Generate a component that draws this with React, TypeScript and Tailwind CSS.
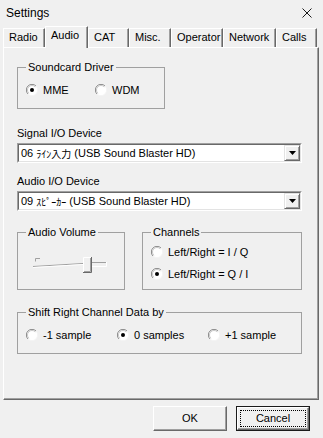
import React from "react";

function Radio({ checked }: { checked?: boolean }) {
  return (
    <svg width="12" height="12" viewBox="0 0 12 12" className="shrink-0">
      <circle cx="6" cy="6" r="5.5" fill="#ffffff" />
      <path d="M10 2 A5.5 5.5 0 0 0 2 10" fill="none" stroke="#8a8a8a" strokeWidth="1" />
      <path d="M9.2 2.8 A4.5 4.5 0 0 0 2.8 9.2" fill="none" stroke="#c8c8c8" strokeWidth="1" />
      <path d="M2 10 A5.5 5.5 0 0 0 10 2" fill="none" stroke="#f4f4f4" strokeWidth="1" />
      {checked && <circle cx="6" cy="6" r="2" fill="#000000" />}
    </svg>
  );
}

function RadioItem({ label, checked, w }: { label: string; checked?: boolean; w: string }) {
  return (
    <div className={`flex items-center gap-[5px] h-[14px] ${w}`}>
      <Radio checked={checked} />
      <span className="leading-[13px] whitespace-nowrap">{label}</span>
    </div>
  );
}

function Group({ title, className, children }: { title: string; className: string; children?: React.ReactNode }) {
  return (
    <div className={`relative border border-[#a0a0a0] ${className}`}>
      <span className="absolute top-[-7px] left-[8px] px-[2px] bg-[#f0f0f0] leading-[13px] whitespace-nowrap">
        {title}
      </span>
      {children}
    </div>
  );
}

function Combo({ children }: { children: React.ReactNode }) {
  return (
    <div className="w-[285px] h-[20px] border border-t-[#a0a0a0] border-l-[#a0a0a0] border-r-white border-b-white">
      <div className="w-full h-full flex border border-t-[#696969] border-l-[#696969] border-r-[#e3e3e3] border-b-[#e3e3e3] bg-white">
        <div className="flex-1 flex items-center pl-[2px] leading-[13px] whitespace-nowrap overflow-hidden">
          {children}
        </div>
        <div className="w-[16px] h-full flex items-center justify-center bg-[#f0f0f0] border border-t-[#e3e3e3] border-l-[#e3e3e3] border-r-[#696969] border-b-[#696969] shadow-[inset_1px_1px_0_#ffffff,inset_-1px_-1px_0_#a0a0a0]">
          <svg width="7" height="4" viewBox="0 0 7 4">
            <path d="M0 0 H7 L3.5 4 Z" fill="#000" />
          </svg>
        </div>
      </div>
    </div>
  );
}

function Jp({ children }: { children: React.ReactNode }) {
  return <span className="font-['Noto_Sans_CJK_JP',sans-serif] text-[10px]">{children}</span>;
}

function Tab({ label, w, selected }: { label: string; w: string; selected?: boolean }) {
  if (selected) {
    return (
      <div
        className={`${w} h-[22px] mb-[-1px] relative z-10 bg-[#f0f0f0] border-t border-l border-t-white border-l-white border-r border-r-[#696969] shadow-[inset_-1px_0_0_#a0a0a0] pl-[5px] pt-[2px] leading-[13px]`}
      >
        {label}
      </div>
    );
  }
  return (
    <div
      className={`${w} h-[19px] bg-[#f0f0f0] border-t border-l border-t-white border-l-white border-r border-r-[#696969] shadow-[inset_-1px_0_0_#a0a0a0] pl-[5px] pt-[2px] leading-[13px]`}
    >
      {label}
    </div>
  );
}

function Button({ label, isDefault }: { label: string; isDefault?: boolean }) {
  if (isDefault) {
    return (
      <div className="w-[74px] h-[25px] border border-[#1a1a1a]">
        <div className="w-full h-full border border-t-white border-l-white border-r-[#696969] border-b-[#696969] shadow-[inset_-1px_-1px_0_#a0a0a0] flex items-center justify-center p-[2px]">
          <div className="w-full h-full border border-dotted border-[#000] flex items-center justify-center leading-[13px]">
            {label}
          </div>
        </div>
      </div>
    );
  }
  return (
    <div className="w-[74px] h-[25px] border border-t-white border-l-white border-r-[#696969] border-b-[#696969] shadow-[inset_-1px_-1px_0_#a0a0a0] flex items-center justify-center leading-[13px]">
      {label}
    </div>
  );
}

export default function App() {
  return (
    <div className="w-[323px] h-[438px] bg-[#f0f0f0] overflow-hidden font-['Liberation_Sans',Arial,sans-serif] text-[11px] text-black flex flex-col">
      {/* Title bar */}
      <div className="h-[26px] flex items-center justify-between pl-[6px] pr-[11px]">
        <span className="text-[12px] leading-[16px]">Settings</span>
        <svg width="10" height="10" viewBox="0 0 10 10">
          <path d="M0.5 0.5 L9.5 9.5 M9.5 0.5 L0.5 9.5" stroke="#1a1a1a" strokeWidth="1" />
        </svg>
      </div>

      {/* Tabs */}
      <div className="flex items-end pl-[3px] h-[21px]">
        <Tab label="Radio" w="w-[42px]" />
        <Tab label="Audio" w="w-[43px]" selected />
        <Tab label="CAT" w="w-[41px]" />
        <Tab label="Misc." w="w-[42px]" />
        <Tab label="Operator" w="w-[52px]" />
        <Tab label="Network" w="w-[53px]" />
        <Tab label="Calls" w="w-[41px]" />
      </div>

      {/* Panel */}
      <div className="ml-[3px] w-[316px] h-[353px] border-l border-t border-l-white border-t-white border-r border-b border-r-[#696969] border-b-[#696969] shadow-[inset_-1px_-1px_0_#a0a0a0] pl-[13px] pt-[19px] flex flex-col">
        <Group title="Soundcard Driver" className="w-[148px] h-[42px] pt-[15px] pl-[8px]">
          <div className="flex">
            <RadioItem label="MME" checked w="w-[69px]" />
            <RadioItem label="WDM" w="w-[60px]" />
          </div>
        </Group>

        <div className="mt-[18px] leading-[13px]">Signal I/O Device</div>
        <div className="mt-[3px]">
          <Combo>
            <span>06&nbsp;</span>
            <Jp>ﾗｲﾝ入力</Jp>
            <span>&nbsp;(USB Sound Blaster HD)</span>
          </Combo>
        </div>

        <div className="mt-[12px] leading-[13px]">Audio I/O Device</div>
        <div className="mt-[3px]">
          <Combo>
            <span>09&nbsp;</span>
            <Jp>ｽﾋﾟｰｶｰ</Jp>
            <span>&nbsp;(USB Sound Blaster HD)</span>
          </Combo>
        </div>

        <div className="mt-[21px] flex gap-[17px]">
          <Group title="Audio Volume" className="w-[108px] h-[58px] pl-[14px] pt-[22px]">
            <svg width="80" height="20" viewBox="0 0 80 20">
              {/* tick mark */}
              <path d="M3.5 6.5 V3.5 H8" fill="none" stroke="#a0a0a0" strokeWidth="1" />
              {/* track left (slanted as in reference) */}
              <path d="M1 11.5 L51 8.5" stroke="#a0a0a0" strokeWidth="1" />
              <path d="M1 12.5 L51 9.5" stroke="#ffffff" strokeWidth="1" />
              {/* track right */}
              <path d="M59 7.5 H74" stroke="#a0a0a0" strokeWidth="1" />
              <path d="M59 11.5 H74.5 V7" fill="none" stroke="#ffffff" strokeWidth="1" />
              {/* thumb */}
              <rect x="51" y="2" width="9" height="16" fill="#f0f0f0" />
              <path d="M51.5 17.5 V2.5 H59.5" fill="none" stroke="#ffffff" strokeWidth="1" />
              <path d="M51 17.5 H59.5 V2" fill="none" stroke="#696969" strokeWidth="1" />
              <path d="M52 16.5 H58.5 V3" fill="none" stroke="#a0a0a0" strokeWidth="1" />
            </svg>
          </Group>
          <Group title="Channels" className="w-[160px] h-[58px] pl-[8px] pt-[12px]">
            <RadioItem label="Left/Right = I / Q" w="w-[140px]" />
            <div className="mt-[8px]">
              <RadioItem label="Left/Right = Q / I" checked w="w-[140px]" />
            </div>
          </Group>
        </div>

        <Group title="Shift Right Channel Data by" className="mt-[22px] w-[285px] h-[42px] pl-[8px] pt-[15px]">
          <div className="flex">
            <RadioItem label="-1 sample" w="w-[91px]" />
            <RadioItem label="0 samples" checked w="w-[91px]" />
            <RadioItem label="+1 sample" w="w-[80px]" />
          </div>
        </Group>
      </div>

      {/* Buttons */}
      <div className="mt-[6px] flex justify-end gap-[9px] pr-[13px]">
        <Button label="OK" />
        <Button label="Cancel" isDefault />
      </div>
    </div>
  );
}
